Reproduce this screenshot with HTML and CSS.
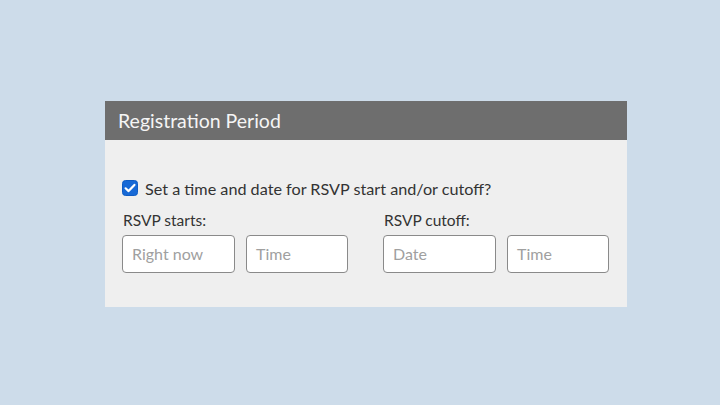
FILE: index.html
```html
<!DOCTYPE html>
<html>
<head>
<meta charset="utf-8">
<link rel="stylesheet" href="styles.css">
</head>
<body>
<div class="panel">
  <div class="panel-header">Registration Period</div>
  <div class="panel-body">
    <label class="check-row">
      <span class="checkbox"><svg width="16" height="16" viewBox="0 0 16 16"><rect x="0.5" y="0.5" width="15" height="15" rx="3" fill="#1769d6" stroke="#0f5cc4"/><path d="M3.6 8.3 L6.6 11.1 L12.4 4.9" fill="none" stroke="#fff" stroke-width="2.2" stroke-linecap="round" stroke-linejoin="round"/></svg></span>
      <span class="check-text">Set a time and date for RSVP start and/or cutoff?</span>
    </label>
    <div class="fields">
      <div class="group first">
        <div class="group-label">RSVP starts:</div>
        <div class="inputs">
          <div class="input wide">Right now</div>
          <div class="input narrow">Time</div>
        </div>
      </div>
      <div class="group">
        <div class="group-label">RSVP cutoff:</div>
        <div class="inputs">
          <div class="input wide">Date</div>
          <div class="input narrow">Time</div>
        </div>
      </div>
    </div>
  </div>
</div>
</body>
</html>
```
FILE: styles.css
```css
html, body {
  margin: 0;
  padding: 0;
}
body {
  background: #cddcea;
  width: 720px;
  height: 405px;
  padding: 101px 0 0 105px;
  box-sizing: border-box;
  font-family: Lato, "Noto Sans", sans-serif;
}
.panel {
  width: 522px;
  background: #efefef;
}
.panel-header {
  height: 39px;
  line-height: 39px;
  background: #6e6e6e;
  color: #f5f5f5;
  font-size: 19.5px;
  padding-left: 13px;
}
.panel-body {
  padding: 40px 18px 34px 17px;
}
.check-row {
  display: flex;
  align-items: center;
  height: 16px;
  gap: 7px;
}
.checkbox {
  display: block;
  width: 16px;
  height: 16px;
}
.checkbox svg {
  display: block;
}
.check-text {
  font-size: 16.2px;
  color: #333;
}
.fields {
  display: flex;
  margin-top: 15px;
}
.group {
  flex: 0 0 auto;
}
.group.first {
  flex: 0 0 261px;
}
.group-label {
  font-size: 15.5px;
  color: #333;
  line-height: 19px;
  height: 19px;
  margin-left: 1px;
}
.inputs {
  display: flex;
  gap: 11px;
  margin-top: 5px;
}
.input {
  box-sizing: border-box;
  height: 38px;
  border: 1.5px solid #8a8a8a;
  border-radius: 4px;
  background: #fff;
  color: #a0a0a0;
  font-size: 16px;
  line-height: 35px;
  padding-left: 9px;
}
.wide {
  width: 113px;
}
.narrow {
  width: 102px;
}
```
